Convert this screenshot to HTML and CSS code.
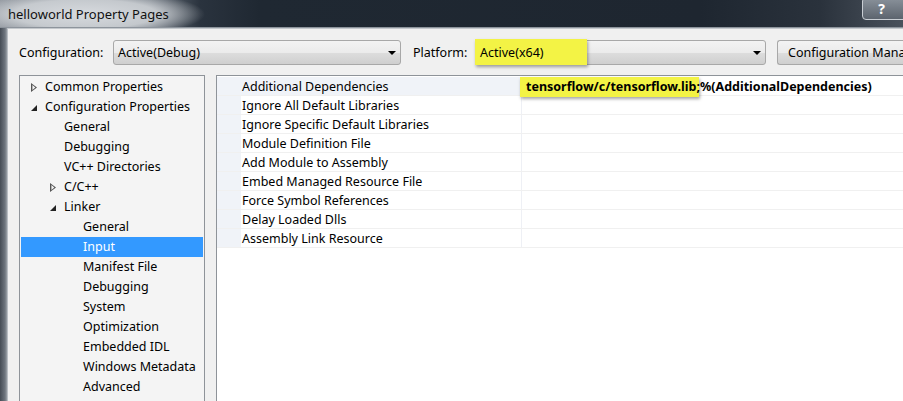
FILE: index.html
```html
<!DOCTYPE html>
<html>
<head>
<meta charset="utf-8">
<link rel="stylesheet" href="styles.css">
</head>
<body>
<div class="window">
  <div class="titlebar">
    <span class="title">helloworld Property Pages</span>
    <span class="help">?</span>
  </div>
  <div class="body">
    <div class="frame-left"></div>
    <div class="client">
      <div class="toolbar">
        <span class="label cfg-label">Configuration:</span>
        <div class="combo cfg-combo"><span>Active(Debug)</span><i class="arrow"></i></div>
        <span class="label plat-label">Platform:</span>
        <div class="combo plat-combo"><span class="hl hl-plat"></span><span class="ctext">Active(x64)</span><i class="arrow"></i></div>
        <div class="button">Configuration Mana</div>
      </div>
      <div class="panes">
        <div class="tree">
          <div class="node l1"><i class="tri open-no"></i>Common Properties</div>
          <div class="node l1"><i class="tri filled"></i>Configuration Properties</div>
          <div class="node l2">General</div>
          <div class="node l2">Debugging</div>
          <div class="node l2">VC++ Directories</div>
          <div class="node l2 exp"><i class="tri open-no"></i>C/C++</div>
          <div class="node l2 exp"><i class="tri filled"></i>Linker</div>
          <div class="node l3">General</div>
          <div class="node l3 sel">Input</div>
          <div class="node l3">Manifest File</div>
          <div class="node l3">Debugging</div>
          <div class="node l3">System</div>
          <div class="node l3">Optimization</div>
          <div class="node l3">Embedded IDL</div>
          <div class="node l3">Windows Metadata</div>
          <div class="node l3">Advanced</div>
        </div>
        <div class="grid">
          <div class="rows">
            <div class="row first"><div class="gut"></div><div class="name">Additional Dependencies</div><div class="val"><span class="hl hl-val"></span><span class="vtext">tensorflow/c/tensorflow.lib;%(AdditionalDependencies)</span></div></div>
            <div class="row"><div class="gut"></div><div class="name">Ignore All Default Libraries</div><div class="val"></div></div>
            <div class="row"><div class="gut"></div><div class="name">Ignore Specific Default Libraries</div><div class="val"></div></div>
            <div class="row"><div class="gut"></div><div class="name">Module Definition File</div><div class="val"></div></div>
            <div class="row"><div class="gut"></div><div class="name">Add Module to Assembly</div><div class="val"></div></div>
            <div class="row"><div class="gut"></div><div class="name">Embed Managed Resource File</div><div class="val"></div></div>
            <div class="row"><div class="gut"></div><div class="name">Force Symbol References</div><div class="val"></div></div>
            <div class="row"><div class="gut"></div><div class="name">Delay Loaded Dlls</div><div class="val"></div></div>
            <div class="row"><div class="gut"></div><div class="name">Assembly Link Resource</div><div class="val"></div></div>
          </div>
        </div>
      </div>
    </div>
  </div>
</div>
</body>
</html>
```
FILE: styles.css
```css
* { box-sizing: border-box; }
html, body { margin: 0; padding: 0; }
body {
  width: 903px; height: 401px; overflow: hidden;
  font-family: "Noto Sans", "Open Sans", sans-serif;
  font-size: 12px; color: #000;
}
.window { display: flex; flex-direction: column; height: 401px; }
.titlebar {
  height: 28px; flex: none; position: relative;
  display: flex; align-items: center; padding-left: 8px;
  background:
    radial-gradient(ellipse 120px 24px at 85px 14px, rgba(218,221,225,0.97) 0, rgba(205,209,213,0.9) 60%, rgba(200,204,208,0) 100%),
    linear-gradient(to right, #8a9098 0, #6a727c 150px, #2a333e 200px, #1f2832 260px, #1e2630 700px, #2a323c 820px, #4a525c 903px);
  border-bottom: 1px solid #8d949c;
}
.title { font-size: 13px; color: #111; }
.help {
  position: absolute; right: -6px; top: -3px; width: 47px; height: 23px;
  border: 1px solid #c9ced4; border-radius: 4px;
  background: linear-gradient(#8a929b, #5c646e);
  color: #fff; font-weight: bold; font-size: 14px; text-align: center; line-height: 22px;
  padding-right: 8px;
}
.body { flex: 1; display: flex; min-height: 0; }
.frame-left { width: 7px; flex: none; background: linear-gradient(to right, #454c55, #6e757e 5px, #9aa0a6); }
.client {
  flex: 1; background: #f0f0f0; border-left: 1px solid #b8bdc3; border-top: 1px solid #c4c8cc;
  display: flex; flex-direction: column; padding-left: 11px;
}
.toolbar { height: 46px; flex: none; display: flex; align-items: center; padding-top: 1px; }
.label { font-size: 12.5px; }
.cfg-label { width: 94px; }
.combo {
  position: relative; height: 25px; display: flex; align-items: center; padding-left: 4px;
  border: 1px solid #a8a8a8; border-radius: 3px;
  background: linear-gradient(#f3f3f3 0, #ebebeb 50%, #dddddd 51%, #cfcfcf 100%);
  font-size: 12.5px;
}
.cfg-combo { width: 288px; }
.plat-label { margin-left: 12px; width: 62px; }
.plat-combo { width: 291px; }
.ctext { position: relative; }
.arrow {
  position: absolute; right: 4px; top: 10px; width: 0; height: 0;
  border-left: 4px solid transparent; border-right: 4px solid transparent; border-top: 4px solid #000;
}
.hl { position: absolute; background: #f3f345; box-shadow: 1px 2px 3px rgba(0,0,0,0.35); }
.hl-plat { left: -1px; top: -2px; width: 112px; height: 26px; }
.button {
  margin-left: 11px; height: 25px; flex: 1; white-space: nowrap; overflow: hidden;
  border: 1px solid #a8a8a8; border-right: none; border-radius: 3px 0 0 3px;
  background: linear-gradient(#f3f3f3 0, #ebebeb 50%, #dddddd 51%, #cfcfcf 100%);
  padding-left: 10px; line-height: 23px; font-size: 12.5px;
}
.panes { flex: 1; display: flex; min-height: 0; }
.tree {
  width: 186px; flex: none; background: #f4f4f4;
  border: 1px solid #8e9399; border-bottom: none; padding: 1px 1px 0 1px;
}
.node { height: 20px; line-height: 20px; white-space: nowrap; font-size: 12.5px; position: relative; }
.l1 { padding-left: 24px; }
.l2 { padding-left: 43px; }
.l3 { padding-left: 62px; }
.sel { background: #3399ff; color: #fff; }
.tri { position: absolute; top: 6px; width: 0; height: 0; }
.l1 .tri { left: 10px; }
.l2 .tri { left: 29px; }
.tri.open-no {
  width: 6px; height: 9px;
  background: #555;
  clip-path: polygon(0 0, 100% 50%, 0 100%, 0 0, 1.4px 2px, 1.4px 7px, 4.3px 4.5px, 1.4px 2px);
}
.tri.filled {
  top: 8px; width: 6px; height: 6px; background: #222;
  clip-path: polygon(100% 0, 100% 100%, 0 100%);
}
.grid {
  flex: 1; margin-left: 11px; background: #fff;
  border-left: 1px solid #8e9399; border-top: 1px solid #8e9399;
}
.rows { display: flex; flex-direction: column; padding-top: 1px; }
.row { height: 19px; display: flex; border-bottom: 1px solid #f0f0f0; }
.gut { width: 24px; flex: none; background: #f0f3f8; }
.name { width: 281px; flex: none; padding-left: 1px; line-height: 20px; white-space: nowrap; font-size: 12.5px; border-right: 1px solid #eef0f5; }
.first .name { background: #f0f3f8; }
.val { flex: 1; position: relative; padding-left: 4px; line-height: 20px; white-space: nowrap; }
.hl-val { left: -2px; top: 0; width: 179px; height: 20px; }
.vtext { position: relative; font-weight: bold; font-size: 12.5px; }
```
